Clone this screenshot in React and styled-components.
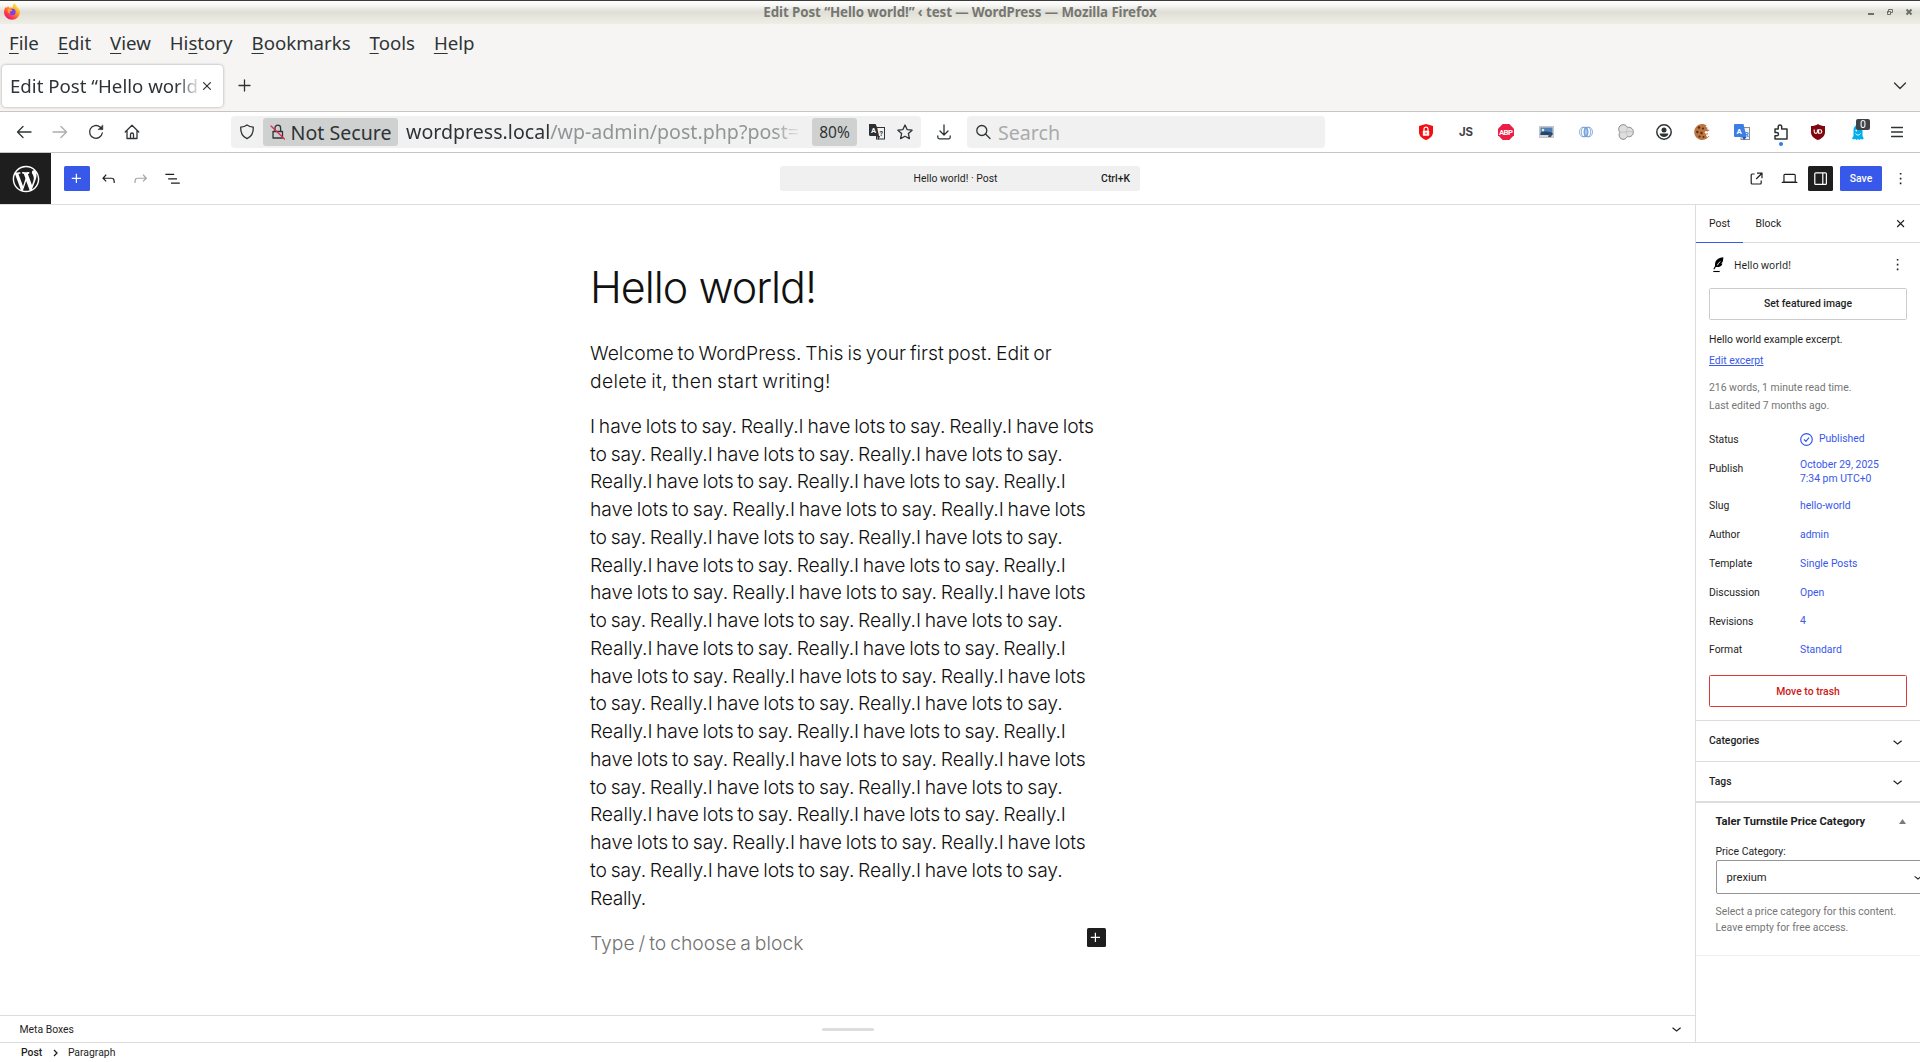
import React from "react";
import styled, { createGlobalStyle, css } from "styled-components";

const Global = createGlobalStyle`
  * { box-sizing: border-box; }
  html, body { margin: 0; padding: 0; overflow: hidden; background: #fff; }
  svg { display: block; flex: none; }
`;

const chromeFont = `"Noto Sans", "Open Sans", sans-serif`;
const wpFont = `Roboto, "Liberation Sans", sans-serif`;
const bodyFont = `Inter, Roboto, sans-serif`;

const Screen = styled.div`
  width: 1920px;
  height: 1062px;
  display: flex;
  flex-direction: column;
  overflow: hidden;
  color: #1e1e1e;
  font-family: ${wpFont};
  font-size: 10.4px;
`;

/* ---------- window chrome ---------- */

const TitleBar = styled.div`
  height: 24px;
  flex: none;
  display: grid;
  grid-template-columns: 200px 1fr 200px;
  align-items: center;
  border-top: 1px solid #3c3a3c;
  background: linear-gradient(#ffffff 0, #f6f6f3 20%, #dfdfd8 48%, #e4e4da 62%, #eeeee6 100%);
  font-family: ${chromeFont};
`;
const TitleText = styled.div`
  padding-bottom: 2px;
  text-align: center;
  font-size: 13.33px;
  font-weight: 700;
  letter-spacing: -0.09px;
  color: #767672;
  white-space: nowrap;
`;
const FoxSlot = styled.div`
  padding: 0 0 2px 4px;
`;
const WindowButtons = styled.div`
  display: flex;
  justify-content: flex-end;
  align-items: center;
  gap: 11px;
  padding: 0 7px 1px 0;
`;

const MenuBar = styled.div`
  height: 40px;
  flex: none;
  display: flex;
  padding-left: 9px;
  gap: 18.9px;
  background: #f6f5f4;
  font: 18.67px/37px ${chromeFont};
  color: #2e3436;
`;
const MenuItem = styled.span`
  white-space: nowrap;
  u {
    text-decoration-thickness: 1px;
    text-underline-offset: 3px;
  }
`;

const TabStrip = styled.div`
  height: 48px;
  flex: none;
  display: flex;
  align-items: center;
  padding: 0 13px 4px 2px;
  border-bottom: 1px solid #c9c5c1;
  background: #f6f5f4;
  color: #2e3436;
`;
const Tab = styled.div`
  width: 221px;
  height: 42px;
  display: flex;
  align-items: center;
  padding-left: 8px;
  border-radius: 4px;
  background: #fff;
  box-shadow: 0 0 3px rgba(0, 0, 0, 0.35);
`;
const TabTitle = styled.div`
  width: 188px;
  overflow: hidden;
  white-space: nowrap;
  font: 18.67px/42px ${chromeFont};
  mask-image: linear-gradient(90deg, #000 88%, transparent 102%);
`;
const StripSpacer = styled.div`
  flex: 1;
`;
const NewTab = styled.div`
  margin-left: 15px;
`;

const NavBar = styled.div`
  height: 41px;
  flex: none;
  display: flex;
  align-items: center;
  border-bottom: 1px solid #c9c5c1;
  background: #fff;
  color: #2e3436;
  font-family: ${chromeFont};
`;
const Slot = styled.div`
  width: ${(p) => p.$w}px;
  height: 100%;
  flex: none;
  display: flex;
  align-items: center;
  justify-content: center;
  opacity: ${(p) => (p.$dim ? 0.4 : 1)};
`;
const Field = styled.div`
  width: ${(p) => p.$w}px;
  height: 32px;
  flex: none;
  display: flex;
  align-items: center;
  margin-left: ${(p) => p.$ml}px;
  border-radius: 4px;
  background: #f1f1f1;
`;
const Chip = styled.div`
  width: ${(p) => p.$w}px;
  height: 28px;
  flex: none;
  display: flex;
  align-items: center;
  justify-content: center;
  gap: 5px;
  border-radius: 3px;
  background: #cfd1d0;
  font-size: ${(p) => p.$size}px;
  white-space: nowrap;
`;
const Address = styled.div`
  width: 394px;
  margin-left: 8px;
  padding-right: 10px;
  flex: none;
  overflow: hidden;
  white-space: nowrap;
  font-size: 19.6px;
  line-height: 32px;
  color: #929595;
  mask-image: linear-gradient(90deg, #000 93%, transparent 101%);
  b {
    font-weight: 400;
    color: #2e3436;
  }
`;
const AddressGap = styled.div`
  width: 12px;
  flex: none;
`;
const Placeholder = styled.span`
  margin-left: -1px;
  font-size: 19.6px;
  color: #a9abab;
`;
const ExtensionRow = styled.div`
  display: flex;
  height: 100%;
  margin-left: 81px;
`;
const ExtLabel = styled.span`
  font: 700 11.4px ${bodyFont};
  color: #3d4244;
`;
const Badged = styled.div`
  position: relative;
`;
const CountBadge = styled.span`
  position: absolute;
  left: 4px;
  top: -6px;
  width: 14px;
  height: 11px;
  border-radius: 2px;
  background: #3f4247;
  color: #fff;
  font: 10.5px/11px ${wpFont};
  text-align: center;
`;
const Dotted = styled.div`
  position: relative;
  &::after {
    content: "";
    position: absolute;
    left: 6px;
    top: 18px;
    width: 4px;
    height: 4px;
    border-radius: 50%;
    background: #2a7fe0;
  }
`;

/* ---------- editor header ---------- */

const EditorHeader = styled.header`
  height: 52px;
  flex: none;
  display: grid;
  grid-template-columns: 780px 360px 780px;
  align-items: center;
  border-bottom: 1px solid #dddddd;
  background: #fff;
`;
const HeaderSide = styled.div`
  height: 51px;
  display: flex;
  align-items: center;
  justify-content: ${(p) => (p.$end ? "flex-end" : "flex-start")};
`;
const LogoBox = styled.div`
  width: 51px;
  height: 51px;
  display: flex;
  align-items: center;
  justify-content: center;
  margin-right: 13px;
  background: #1e1e1e;
  color: #fff;
`;
const SquareButton = styled.div`
  width: ${(p) => p.$w || 25}px;
  height: 25px;
  display: flex;
  align-items: center;
  justify-content: center;
  margin-right: ${(p) => p.$mr || 0}px;
  border-radius: 1.5px;
  background: ${(p) => p.$bg};
  color: #fff;
  font-size: 10.4px;
  font-weight: 500;
`;
const CommandBar = styled.div`
  height: 25px;
  display: grid;
  grid-template-columns: 60px 1fr 60px;
  align-items: center;
  padding: 0 10px;
  border-radius: 3px;
  background: #f0f0f0;
  line-height: 25px;
`;
const CommandTitle = styled.span`
  grid-column: 2;
  text-align: center;
  margin-right: 9px;
`;
const Shortcut = styled.span`
  text-align: right;
  font-weight: 500;
`;

/* ---------- main ---------- */

const Main = styled.div`
  height: 837px;
  flex: none;
  display: flex;
`;
const Canvas = styled.div`
  width: 1695px;
  display: flex;
  flex-direction: column;
`;
const Article = styled.article`
  width: 516px;
  height: 810px;
  flex: none;
  margin-left: 590px;
  padding-top: 54px;
  color: #111;
  font-family: ${bodyFont};
  font-weight: 300;
`;
const PostTitle = styled.h1`
  margin: 0 0 25px;
  font-size: 43px;
  font-weight: 350;
  line-height: 56px;
  letter-spacing: -1px;
  white-space: nowrap;
`;
const Para = styled.p`
  margin: 0 0 17.3px;
  font-size: 19.3px;
  line-height: 27.75px;
  word-spacing: -1.5px;
  white-space: nowrap;
`;
const Line = styled.span`
  display: block;
  letter-spacing: ${(p) => p.$ls || 0}px;
`;
const PromptRow = styled.div`
  display: flex;
  justify-content: space-between;
  align-items: flex-start;
`;
const Prompt = styled(Para)`
  color: #727272;
`;
const Inserter = styled.div`
  width: 19px;
  height: 19px;
  margin: -2px 0.5px 0 0;
  display: flex;
  align-items: center;
  justify-content: center;
  border-radius: 1.5px;
  background: #1e1e1e;
  color: #fff;
`;
const MetaBar = styled.div`
  height: 27px;
  display: grid;
  grid-template-columns: 1fr 52px 1fr;
  align-items: center;
  border-top: 1px solid #dddddd;
  padding: 0 9px;
`;
const MetaLabel = styled.span`
  padding-left: 10.5px;
`;
const Grip = styled.div`
  height: 3px;
  width: 52px;
  border-radius: 2px;
  background: #dddddd;
`;
const EndIcon = styled.div`
  display: flex;
  justify-content: flex-end;
`;

/* ---------- sidebar ---------- */

const Sidebar = styled.aside`
  width: 225px;
  border-left: 1px solid #dddddd;
  overflow: hidden;
`;
const Tabs = styled.div`
  height: 38px;
  display: flex;
  align-items: stretch;
  border-bottom: 1px solid #dddddd;
`;
const TabButton = styled.div`
  height: 38px;
  padding: 0 12.4px 0 13px;
  line-height: 37px;
  ${(p) => p.$active && css`border-bottom: 1px solid #3858e9;`}
`;
const TabClose = styled.div`
  display: flex;
  flex: 1;
  align-items: center;
  justify-content: flex-end;
  padding-right: 10px;
`;
const Summary = styled.div`
  height: 477px;
  padding: 12px 13px 0;
`;
const CardHeader = styled.div`
  height: 19px;
  display: flex;
  align-items: center;
  margin-bottom: 14px;
`;
const CardTitle = styled.span`
  flex: 1;
  padding-left: 6px;
  font-family: ${chromeFont};
  font-size: 10.1px;
`;
const WideButton = styled.div`
  height: 32px;
  border: 1px solid ${(p) => (p.$danger ? "#d63b3b" : "#cccccc")};
  border-radius: 1.5px;
  color: ${(p) => (p.$danger ? "#cc1818" : "#1e1e1e")};
  font-weight: 500;
  line-height: ${(p) => (p.$danger ? 31 : 29)}px;
  text-align: center;
`;
const Copy = styled.div`
  margin-top: ${(p) => p.$mt}px;
  line-height: ${(p) => p.$lh || 14}px;
  color: ${(p) => p.$color || "#1e1e1e"};
  text-decoration: ${(p) => (p.$link ? "underline" : "none")};
  white-space: nowrap;
`;
const Props = styled.div`
  display: flex;
  flex-direction: column;
  margin: 11px 0 11px;
`;
const PropRow = styled.div`
  height: ${(p) => p.$h}px;
  display: grid;
  grid-template-columns: 91px 1fr;
  align-items: center;
`;
const PropLabel = styled.span`
  padding-bottom: ${(p) => p.$lift || 0}px;
`;
const PropValue = styled.span`
  display: flex;
  align-items: center;
  gap: 6px;
  padding-top: ${(p) => p.$drop || 0}px;
  line-height: 14px;
  color: #3858e9;
`;
const Panel = styled.div`
  height: ${(p) => p.$h}px;
  display: flex;
  align-items: center;
  justify-content: space-between;
  padding: 0 13px 1px;
  border-top: 1px solid #dddddd;
  font-weight: 500;
`;
const PanelIcon = styled.div`
  padding-top: 2px;
`;
const MetaBox = styled.div`
  width: 250px;
  height: 155px;
  padding: 0 0 0 19.5px;
  border-top: 2px solid #dddddd;
  border-bottom: 1px solid #f0f0f0;
`;
const MetaHead = styled.div`
  height: 37px;
  display: flex;
  align-items: center;
  font-size: 11.2px;
  font-weight: 700;
`;
const MetaTitle = styled.span`
  width: 183px;
  white-space: nowrap;
`;
const SelectBox = styled.div`
  width: 218px;
  height: 34px;
  display: flex;
  align-items: center;
  justify-content: space-between;
  margin-top: 1px;
  padding: 0 7px 0 10px;
  border: 1px solid #949494;
  border-radius: 2px;
  font-size: 11.2px;
`;

const Breadcrumb = styled.footer`
  height: 20px;
  flex: none;
  display: flex;
  align-items: center;
  gap: 10.3px;
  padding-left: 21px;
  border-top: 1px solid #dddddd;
  strong {
    font-weight: 500;
  }
`;

/* ---------- icons ---------- */

const Glyph = ({ d, size = 19.2, view = "0 0 24 24" }) => (
  <svg width={size} height={size} viewBox={view} fill="currentColor">
    <path d={d} />
  </svg>
);
const Outline = ({ size = 16, w = 1.3, view = 16, children }) => (
  <svg
    width={size}
    height={size}
    viewBox={`0 0 ${view} ${view}`}
    fill="none"
    stroke="currentColor"
    strokeWidth={w}
    strokeLinecap="round"
    strokeLinejoin="round"
  >
    {children}
  </svg>
);

const wp = {
  logo: "M20 10c0-5.51-4.49-10-10-10C4.48 0 0 4.49 0 10c0 5.52 4.48 10 10 10 5.51 0 10-4.48 10-10zM7.78 15.37L4.37 6.22c.55-.02 1.17-.08 1.17-.08.5-.06.44-1.13-.06-1.11 0 0-1.45.11-2.37.11-.18 0-.37 0-.58-.01C4.12 2.69 6.87 1.11 10 1.11c2.33 0 4.45.87 6.05 2.34-.68-.11-1.65.39-1.65 1.58 0 .74.45 1.36.9 2.1.35.61.55 1.36.55 2.46 0 1.49-1.4 5-1.4 5l-3.03-8.37c.54-.02.82-.17.82-.17.5-.05.44-1.25-.06-1.22 0 0-1.44.12-2.38.12-.87 0-2.33-.12-2.33-.12-.5-.03-.56 1.2-.06 1.22l.92.08 1.26 3.41zM17.41 10c.24-.64.74-1.87.43-4.25.7 1.29 1.05 2.71 1.05 4.25 0 3.29-1.73 6.24-4.4 7.78.97-2.59 1.94-5.2 2.92-7.78zM6.1 18.09C3.12 16.65 1.11 13.53 1.11 10c0-1.3.23-2.48.72-3.59C3.25 10.3 4.67 14.2 6.1 18.09zm4.03-6.63l2.58 6.98c-.86.29-1.76.45-2.71.45-.79 0-1.57-.11-2.29-.33.81-2.38 1.62-4.74 2.42-7.1z",
  plus: "M11 12.5V17.5H12.5V12.5H17.5V11H12.5V6H11V11H6V12.5H11Z",
  undo: "M18.3 11.7c-.6-.6-1.4-.9-2.3-.9H6.7l2.9-3.3-1.1-1-4.5 5L8.5 16l1-1-2.7-2.7H16c.5 0 .9.2 1.3.5 1 1 1 3.4 1 4.5v.3h1.5v-.2c0-1.5 0-4.3-1.5-5.7z",
  redo: "M15.6 6.5l-1.1 1 2.9 3.3H8c-.9 0-1.7.3-2.3.9-1.4 1.5-1.4 4.2-1.4 5.6v.2h1.5v-.3c0-1.1 0-3.5 1-4.5.3-.3.7-.5 1.3-.5h9.2L14.5 15l1.1 1.1 4.6-4.6-4.6-5z",
  list: "M3 6h11v1.5H3V6Zm3.5 5.5h11V13h-11v-1.5ZM21 17H10v1.5h11V17Z",
  external:
    "M19.5 4.5h-7V6h4.44l-5.97 5.97 1.06 1.06L18 7.06v4.44h1.5v-7Zm-13 1a2 2 0 0 0-2 2v10a2 2 0 0 0 2 2h10a2 2 0 0 0 2-2v-3H17v3a.5.5 0 0 1-.5.5h-10a.5.5 0 0 1-.5-.5v-10a.5.5 0 0 1 .5-.5h3V5.5h-3Z",
  desktop:
    "M20.5 16h-.7V8c0-1.1-.9-2-2-2H6.2c-1.1 0-2 .9-2 2v8h-.7c-.8 0-1.5.7-1.5 1.5h20c0-.8-.7-1.5-1.5-1.5zM5.7 8c0-.3.2-.5.5-.5h11.6c.3 0 .5.2.5.5v7.6H5.7V8z",
  drawer:
    "M18 4H6c-1.1 0-2 .9-2 2v12c0 1.1.9 2 2 2h12c1.1 0 2-.9 2-2V6c0-1.1-.9-2-2-2zm-4 14.5H6c-.3 0-.5-.2-.5-.5V6c0-.3.2-.5.5-.5h8v13zm4.5-.5c0 .3-.2.5-.5.5h-2.5v-13H18c.3 0 .5.2.5.5v12z",
  more: "M13 19h-2v-2h2v2zm0-6h-2v-2h2v2zm0-6h-2V5h2v2z",
  chevron: "M17.5 11.6L12 16l-5.5-4.4.9-1.2L12 14l4.5-3.6 1 1.2z",
  close:
    "M12 13.06l3.712 3.713 1.061-1.06L13.061 12l3.712-3.712-1.06-1.06L12 10.938 8.288 7.227l-1.061 1.06L10.939 12l-3.712 3.712 1.06 1.061L12 13.061z",
};

const Firefox = () => (
  <svg width="16" height="17" viewBox="0 0 16 17">
    <defs>
      <linearGradient id="fx" x1="0.85" y1="0.1" x2="0.2" y2="0.95">
        <stop offset="0" stopColor="#fff044" />
        <stop offset="0.4" stopColor="#ff9a1f" />
        <stop offset="0.75" stopColor="#ff3b47" />
        <stop offset="1" stopColor="#e3157b" />
      </linearGradient>
    </defs>
    <path d="M10.2 0.3c2 1.5 2.8 3 2.9 4.2 1.700.6 2.900 2.700 2.900 4.800a8 7.500 0 0 1-16 0C0 6.600 1 5 2 3.800l.4 1.200c.6-1 1.400-1.500 2.200-1.700 0 .6 0 1.100.5 1.500 1.400-.4 3-.3 4-.1C8.600 3 9.200 1.400 10.200.3z" fill="url(#fx)" />
    <circle cx="8.300" cy="9" r="3.300" fill="#7b3ff2" />
    <path d="M3.500 6.500c2-.8 3.500-.2 5 .4-.5 1.300-2.200 1.200-2.600 1.600-.3 1 .1 1.800.6 2.300-2 0-3-2-3-4.300z" fill="#ffa436" />
  </svg>
);

const Feather = () => (
  <svg width="19" height="19" viewBox="0 0 19 19">
    <path d="M14.400 2.200c-4 .4-7.600 2.300-8.300 6-.2 1-.1 2-.1 2.700L4.400 14l.9.5 1.500-2.500c2.800.4 5.400-.5 6.200-2.300.3-.6.3-1 .3-1.300l-1.300.2 1.700-1.700c.5-1.600.4-3.200.7-4.700z" fill="#000" />
    <path d="M8.300 10.400c.8-1.700 1.700-2.900 3-3.900" stroke="#fff" strokeWidth=".9" fill="none" />
    <path d="M4.300 16.500h6.400" stroke="#000" strokeWidth="1.100" />
  </svg>
);

const A = "to say. Really.I have lots to say. Really.I have lots to say.";
const B = "Really.I have lots to say. Really.I have lots to say. Really.I";
const C = "have lots to say. Really.I have lots to say. Really.I have lots";
const cycle = [
  [A, -0.07],
  [B, -0.13],
  [C, -0.05],
];
const story = [
  [`I ${C}`, -0.06],
  ...cycle, ...cycle, ...cycle, ...cycle, ...cycle,
  [A, -0.07],
  ["Really.", -0.35],
];

const menus = [
  ["", "F", "ile"],
  ["", "E", "dit"],
  ["", "V", "iew"],
  ["Hi", "s", "tory"],
  ["", "B", "ookmarks"],
  ["", "T", "ools"],
  ["", "H", "elp"],
];

const details = [
  ["Slug", "hello-world", 29],
  ["Author", "admin", 29],
  ["Template", "Single Posts", 29],
  ["Discussion", "Open", 29],
  ["Revisions", "4", 28],
  ["Format", "Standard", 29],
];

const Extensions = () => (
  <ExtensionRow>
    <Slot $w={40}>
      <svg width="14" height="16" viewBox="0 0 14 16">
        <path d="M7 0l7 2v6c0 4-3 6.500-7 8-4-1.500-7-4-7-8V2z" fill="#f60d12" />
        <rect x="3.800" y="6.800" width="6.400" height="5" rx=".6" fill="#fff" />
        <path d="M5 7V5.200a2 2 0 0 1 4 0V7" stroke="#fff" strokeWidth="1.200" fill="none" />
        <rect x="6.500" y="8.300" width="1" height="2" fill="#f60d12" />
      </svg>
    </Slot>
    <Slot $w={40}><ExtLabel>JS</ExtLabel></Slot>
    <Slot $w={40}>
      <svg width="16" height="16" viewBox="0 0 16 16">
        <path d="M4.700 0h6.600L16 4.700v6.600L11.300 16H4.700L0 11.300V4.700z" fill="#ed1e45" />
        <text x="8" y="10.900" textAnchor="middle" fontFamily="Roboto" fontWeight="700" fontSize="7.800" textLength="14" fill="#fff">ABP</text>
      </svg>
    </Slot>
    <Slot $w={40}>
      <svg width="15" height="12" viewBox="0 0 15 12">
        <rect x=".5" y=".5" width="14" height="11" fill="#d4d8dc" stroke="#c3c6ca" />
        <rect x="1.500" y="1.500" width="12" height="7.500" fill="#4f7fb4" />
        <path d="M1.500 7c3-2 7-2 12 0v2h-12z" fill="#24476f" />
        <circle cx="4" cy="4" r="1.300" fill="#e9f0b4" />
        <path d="M9 11l1-3 3 1-1 2z" fill="#4d5258" />
      </svg>
    </Slot>
    <Slot $w={40}>
      <svg width="14" height="12" viewBox="0 0 14 12" fill="none" stroke="#6595d6" strokeWidth=".75">
        <ellipse cx="4.200" cy="6" rx="3.700" ry="4.800" />
        <ellipse cx="5.500" cy="6" rx="3.200" ry="4.800" />
        <ellipse cx="7" cy="6" rx="2" ry="4.800" />
        <ellipse cx="8.500" cy="6" rx="3.200" ry="4.800" />
        <ellipse cx="9.800" cy="6" rx="3.700" ry="4.800" />
      </svg>
    </Slot>
    <Slot $w={39}>
      <svg width="16" height="16" viewBox="0 0 16 16" fill="#dedede" stroke="#858585" strokeWidth="1">
        <path d="M4.500.7c2-.3 4 .7 4.900 2.700 1-.3 2.500-.1 3.800.6 2.500 1.600 2.900 5.500.7 7.600-1.300 1.200-3.100 1.300-4.500.9-.9 1.900-2.800 3-4.700 2.800-2.200-.3-3.900-2.400-3.600-4.700.1-.9.400-1.600.8-2.300C1 7.300.6 6 .7 4.700.9 2.500 2.500 1 4.500.7z" />
        <path d="M9.400 3.400c.2 1.500-.5 3-1.400 4.600l-6.100.3m6.100-.3c1 1.500 1.500 3 1.400 4.500M8 8c1.700-.6 4.500-.6 6.500 0" stroke="#bcbcbc" fill="none" strokeWidth=".8" />
      </svg>
    </Slot>
    <Slot $w={37}>
      <svg width="16" height="16" viewBox="0 0 16 16">
        <circle cx="8" cy="8" r="7.200" fill="none" stroke="#2e3436" strokeWidth="1.500" />
        <circle cx="8" cy="6" r="2.500" fill="#2e3436" />
        <path d="M3.700 9.500h8.600c0 2-2 3.600-4.300 3.600S3.700 11.500 3.700 9.500z" fill="#2e3436" />
      </svg>
    </Slot>
    <Slot $w={40}>
      <svg width="16" height="16" viewBox="0 0 16 16">
        <path d="M8 0c2 0 3.500.6 4.600 1.500L11.500 3l2 .5-.3 2 2.600.500-2.300 1.500-2-.5-1 2 2 1-.3 2 1.800 1.500A8 8 0 1 1 8 0z" fill="#bb7540" />
        <g fill="#5b2c17">
          <circle cx="5" cy="3.500" r="1.200" />
          <circle cx="9" cy="4.500" r="1.100" />
          <circle cx="3.300" cy="8" r="1.200" />
          <circle cx="7.500" cy="9" r="1.200" />
          <circle cx="5.500" cy="12.500" r="1.100" />
          <circle cx="9.500" cy="13" r="1" />
        </g>
        <rect x="12.500" y="9" width="1.500" height="1.500" fill="#d99a68" />
        <rect x="14" y="12" width="1.200" height="1.200" fill="#d99a68" />
      </svg>
    </Slot>
    <Slot $w={40}>
      <svg width="16" height="16" viewBox="0 0 16 16">
        <rect x="7" y="3.500" width="8.500" height="12" fill="#f3f3f3" stroke="#8c8c8c" />
        <text x="12.300" y="12.500" textAnchor="middle" fontFamily="Roboto" fontWeight="700" fontSize="7.500" fill="#4285f4">R</text>
        <path d="M1 0h8.500l3 13H1a1 1 0 0 1-1-1V1a1 1 0 0 1 1-1z" fill="#3d7de6" />
        <path d="M8 13h4.500L10 16z" fill="#2855a8" />
        <text x="5.200" y="9.500" textAnchor="middle" fontFamily="Roboto" fontWeight="700" fontSize="8" fill="#fff">A</text>
      </svg>
    </Slot>
    <Slot $w={37}>
      <Dotted>
        <Outline w={1.5}>
          <path d="M2 5h3.200V2.800a1.700 1.700 0 0 1 3.500 0V5H14v10H2v-3.200h1.800a1.600 1.600 0 0 0 0-3.300H2z" />
        </Outline>
      </Dotted>
    </Slot>
    <Slot $w={38}>
      <svg width="14" height="16" viewBox="0 0 14 16">
        <path d="M7 0c2 1.500 4.500 2 7 2v6c0 4-3 6.500-7 8-4-1.500-7-4-7-8V2c2.500 0 5-.5 7-2z" fill="#800610" />
        <path d="M3.200 5.500v2.300a1.600 1.600 0 0 0 3.200 0V5.500M7.600 5.700v3.600h1.400a1.800 1.800 0 0 0 0-3.600z" stroke="#fff" strokeWidth="1.100" fill="none" />
      </svg>
    </Slot>
    <Slot $w={42}>
      <Badged>
        <svg width="12" height="15" viewBox="0 0 12 15">
          <path d="M1.500 5.500C1.500 2 3.500 0 6 0s4.500 2 4.500 5.500V11l1.300 2.500-1.600 1-1.500-.6-1.300 1-1.400-1-1.400 1-1.300-1-1.500.6L0 13.500 1.500 11z" fill="#00aef0" />
          <path d="M3.500 8.500c1 2 4 2 5 0" stroke="#fff" fill="none" />
          <circle cx="4.300" cy="5.500" r=".9" fill="#fff" />
        </svg>
        <CountBadge>0</CountBadge>
      </Badged>
    </Slot>
    <Slot $w={35}>
      <Outline size={12} view={12} w={1.4}>
        <path d="M.5 1.500h11M.5 6h11M.5 10.500h11" />
      </Outline>
    </Slot>
  </ExtensionRow>
);

export default function App() {
  return (
    <Screen>
      <Global />
      <TitleBar>
        <FoxSlot><Firefox /></FoxSlot>
        <TitleText>Edit Post “Hello world!” ‹ test — WordPress — Mozilla Firefox</TitleText>
        <WindowButtons>
          <svg width="8" height="8" viewBox="0 0 8 8"><rect x="1" y="5" width="6" height="2" fill="#6e6e6a" /></svg>
          <svg width="8" height="8" viewBox="0 0 8 8" fill="none" stroke="#6e6e6a"><path d="M2.500 4.500v-3h4v3h-2M1 3.500h3.500v3H1.500v-3" /></svg>
          <svg width="8" height="8" viewBox="0 0 8 8" stroke="#6e6e6a" strokeWidth="2"><path d="M1.500 1.500l5 5M6.500 1.500l-5 5" /></svg>
        </WindowButtons>
      </TitleBar>

      <MenuBar>
        {menus.map(([pre, key, post]) => (
          <MenuItem key={post}>{pre}<u>{key}</u>{post}</MenuItem>
        ))}
      </MenuBar>

      <TabStrip>
        <Tab>
          <TabTitle>Edit Post “Hello world</TabTitle>
          <Slot $w={18}>
            <Outline size={8} view={8} w={1.2}><path d="M.6.6l6.800 6.800M7.400.6L.6 7.400" /></Outline>
          </Slot>
        </Tab>
        <NewTab>
          <Outline size={13} view={13} w={1.3}><path d="M6.500 1v11M1 6.500h11" /></Outline>
        </NewTab>
        <StripSpacer />
        <Outline size={14} view={14} w={1.3}><path d="M1.500 4l5.500 5.500L12.500 4" /></Outline>
      </TabStrip>

      <NavBar>
        <Slot $w={48}><Outline><path d="M1.500 8h13.500M7 2.500L1.500 8 7 13.500" /></Outline></Slot>
        <Slot $w={24} $dim><Outline><path d="M1 8h13.500M9 2.500L14.500 8 9 13.500" /></Outline></Slot>
        <Slot $w={48}>
          <Outline>
            <path d="M14.300 9a6.400 6.400 0 1 1-2.300-6.100L14 5" />
            <path d="M14.800 1.300v4.300h-4.500z" fill="currentColor" strokeWidth=".6" />
          </Outline>
        </Slot>
        <Slot $w={23}>
          <Outline><path d="M1.200 8L8 1.300 14.800 8M3 6.500v8h10v-8M6.500 14.300V10.500a1.500 1.500 0 0 1 3 0v3.800" /></Outline>
        </Slot>
        <Field $w={690} $ml={88}>
          <Slot $w={32}>
            <Outline><path d="M8 1c2 1.500 4 2 6.300 2.200.2 5-1.500 9.300-6.300 11.500C3.200 12.500 1.500 8.200 1.700 3.200 4 3 6 2.500 8 1z" /></Outline>
          </Slot>
          <Chip $w={135} $size={19.6}>
            <Outline size={16}>
              <path d="M3 7.500h9.500v6.500H3zM5 7.500V4a2.800 2.800 0 0 1 5.600 0v3.500" />
              <path d="M1 2l13.500 13" stroke="#e22850" />
            </Outline>
            Not Secure
          </Chip>
          <Address><b>wordpress.local</b>/wp-admin/post.php?post=1</Address>
          <AddressGap />
          <Chip $w={45} $size={15.5}>80%</Chip>
          <Slot $w={40}>
            <svg width="16" height="16" viewBox="0 0 16 16">
              <rect x="7.500" y="3.500" width="8" height="11.500" fill="none" stroke="#2e3436" />
              <path d="M0 0h6.500l1.500 3 2 9H1.500A1.500 1.500 0 0 1 0 10.500z" fill="#2e2e33" />
              <path d="M8 12h3l-1.500 4z" fill="#2e2e33" />
              <text x="4.600" y="9" textAnchor="middle" fontFamily="Roboto" fontWeight="700" fontSize="7.500" fill="#fff">A</text>
              <text x="12.300" y="11.800" textAnchor="middle" fontFamily="Roboto" fontWeight="700" fontSize="7" fill="#2e3436">?</text>
            </svg>
          </Slot>
          <Slot $w={16}>
            <Outline><path d="M8 1l2.100 4.600 5 .6-3.700 3.400 1 5L8 12.200l-4.400 2.400 1-5L.9 6.200l5-.6z" /></Outline>
          </Slot>
        </Field>
        <Slot $w={46}>
          <Outline><path d="M8 1v9.500M4 7l4 4 4-4M1.800 12v1.300a1.500 1.500 0 0 0 1.500 1.500h9.400a1.500 1.500 0 0 0 1.500-1.500V12" /></Outline>
        </Slot>
        <Field $w={358} $ml={0}>
          <Slot $w={32}><Outline><circle cx="6.800" cy="6.500" r="5" /><path d="M10.500 10l4.500 4.500" /></Outline></Slot>
          <Placeholder>Search</Placeholder>
        </Field>
        <Extensions />
      </NavBar>

      <EditorHeader>
        <HeaderSide>
          <LogoBox><Glyph d={wp.logo} size={32} view="-2 -2 24 24" /></LogoBox>
          <SquareButton $w={26} $bg="#3858e9"><Glyph d={wp.plus} /></SquareButton>
          <Slot $w={37}><Glyph d={wp.undo} /></Slot>
          <Slot $w={27} $dim><Glyph d={wp.redo} /></Slot>
          <Slot $w={37}><Glyph d={wp.list} /></Slot>
        </HeaderSide>
        <CommandBar>
          <CommandTitle>Hello world! · Post</CommandTitle>
          <Shortcut>Ctrl+K</Shortcut>
        </CommandBar>
        <HeaderSide $end>
          <Slot $w={28}><Glyph d={wp.external} /></Slot>
          <Slot $w={37}><Glyph d={wp.desktop} /></Slot>
          <SquareButton $bg="#1e1e1e" $mr={7}><Glyph d={wp.drawer} /></SquareButton>
          <SquareButton $w={42} $bg="#3858e9">Save</SquareButton>
          <Slot $w={38}><Glyph d={wp.more} /></Slot>
        </HeaderSide>
      </EditorHeader>

      <Main>
        <Canvas>
          <Article>
            <PostTitle>Hello world!</PostTitle>
            <Para>
              <Line $ls={0.02}>Welcome to WordPress. This is your first post. Edit or</Line>
              <Line $ls={0.3}>delete it, then start writing!</Line>
            </Para>
            <Para>
              {story.map(([text, ls], i) => <Line key={i} $ls={ls}>{text}</Line>)}
            </Para>
            <PromptRow>
              <Prompt><Line $ls={0.01}>Type / to choose a block</Line></Prompt>
              <Inserter><Glyph d={wp.plus} /></Inserter>
            </PromptRow>
          </Article>
          <MetaBar>
            <MetaLabel>Meta Boxes</MetaLabel>
            <Grip />
            <EndIcon><Glyph d={wp.chevron} /></EndIcon>
          </MetaBar>
        </Canvas>

        <Sidebar>
          <Tabs>
            <TabButton $active>Post</TabButton>
            <TabButton>Block</TabButton>
            <TabClose><Glyph d={wp.close} /></TabClose>
          </Tabs>
          <Summary>
            <CardHeader>
              <Feather />
              <CardTitle>Hello world!</CardTitle>
              <Glyph d={wp.more} />
            </CardHeader>
            <WideButton>Set featured image</WideButton>
            <Copy $mt={13}>Hello world example excerpt.</Copy>
            <Copy $mt={7} $color="#3858e9" $link>Edit excerpt</Copy>
            <Copy $mt={11} $lh={18} $color="#757575">
              <Line>216 words, 1 minute read time.</Line>
              <Line>Last edited 7 months ago.</Line>
            </Copy>
            <Props>
              <PropRow $h={26}>
                <PropLabel>Status</PropLabel>
                <PropValue>
                  <Outline size={13} view={13} w={1.2}>
                    <circle cx="6.500" cy="6.500" r="5.800" />
                    <path d="M4.300 6.800l1.600 1.500 2.900-3.400" />
                  </Outline>
                  Published
                </PropValue>
              </PropRow>
              <PropRow $h={39}>
                <PropLabel $lift={6}>Publish</PropLabel>
                <PropValue $drop={1}>October 29, 2025<br />7:34 pm UTC+0</PropValue>
              </PropRow>
              {details.map(([label, value, h]) => (
                <PropRow key={label} $h={h}>
                  <PropLabel>{label}</PropLabel>
                  <PropValue>{value}</PropValue>
                </PropRow>
              ))}
            </Props>
            <WideButton $danger>Move to trash</WideButton>
          </Summary>
          <Panel $h={41}>Categories<PanelIcon><Glyph d={wp.chevron} /></PanelIcon></Panel>
          <Panel $h={40}>Tags<PanelIcon><Glyph d={wp.chevron} /></PanelIcon></Panel>
          <MetaBox>
            <MetaHead>
              <MetaTitle>Taler Turnstile Price Category</MetaTitle>
              <svg width="7" height="5" viewBox="0 0 7 5"><path d="M3.500 0L7 5H0z" fill="#787c82" /></svg>
            </MetaHead>
            <Copy $mt={5}>Price Category:</Copy>
            <SelectBox>
              prexium
              <Glyph d={wp.chevron} size={16} />
            </SelectBox>
            <Copy $mt={10} $lh={16} $color="#757575">
              <Line>Select a price category for this content.</Line>
              <Line>Leave empty for free access.</Line>
            </Copy>
          </MetaBox>
        </Sidebar>
      </Main>

      <Breadcrumb>
        <strong>Post</strong>
        <svg width="5" height="8" viewBox="0 0 5 8" fill="none" stroke="#1e1e1e" strokeWidth="1.300"><path d="M1 1l3 3-3 3" /></svg>
        <span>Paragraph</span>
      </Breadcrumb>
    </Screen>
  );
}
